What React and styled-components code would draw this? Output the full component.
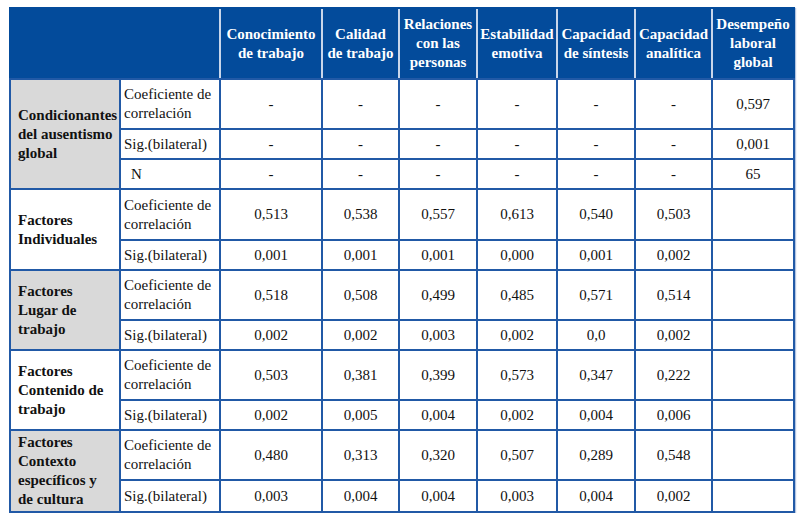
import React from "react";
import styled, { createGlobalStyle } from "styled-components";

const GlobalStyle = createGlobalStyle`
    body {
        margin: 0;
        background: #ffffff;
        font-family: "Liberation Serif", "Times New Roman", serif;
    }
`

const widths = [110, 100, 102, 77, 78, 80, 78, 77, 82]

const headers = [
    ["Conocimiento", "de trabajo"],
    ["Calidad", "de trabajo"],
    ["Relaciones", "con las", "personas"],
    ["Estabilidad", "emotiva"],
    ["Capacidad", "de síntesis"],
    ["Capacidad", "analítica"],
    ["Desempeño", "laboral", "global"],
]

const COEF = ["Coeficiente de", "correlación"]
const SIG = ["Sig.(bilateral)"]

const groups = [
    {
        label: ["Condicionantes", "del ausentismo", "global"],
        shaded: true,
        rows: [
            { name: COEF, h: 50, values: ["-", "-", "-", "-", "-", "-", "0,597"] },
            { name: SIG, h: 30, values: ["-", "-", "-", "-", "-", "-", "0,001"] },
            { name: ["N"], h: 30, indent: true, values: ["-", "-", "-", "-", "-", "-", "65"] },
        ],
    },
    {
        label: ["Factores", "Individuales"],
        rows: [
            { name: COEF, h: 51, values: ["0,513", "0,538", "0,557", "0,613", "0,540", "0,503", ""] },
            { name: SIG, h: 30, values: ["0,001", "0,001", "0,001", "0,000", "0,001", "0,002", ""] },
        ],
    },
    {
        label: ["Factores", "Lugar de", "trabajo"],
        shaded: true,
        rows: [
            { name: COEF, h: 50, values: ["0,518", "0,508", "0,499", "0,485", "0,571", "0,514", ""] },
            { name: SIG, h: 30, values: ["0,002", "0,002", "0,003", "0,002", "0,0", "0,002", ""] },
        ],
    },
    {
        label: ["Factores", "Contenido de", "trabajo"],
        rows: [
            { name: COEF, h: 50, values: ["0,503", "0,381", "0,399", "0,573", "0,347", "0,222", ""] },
            { name: SIG, h: 30, values: ["0,002", "0,005", "0,004", "0,002", "0,004", "0,006", ""] },
        ],
    },
    {
        label: ["Factores", "Contexto", "específicos y", "de cultura"],
        shaded: true,
        rows: [
            { name: COEF, h: 50, values: ["0,480", "0,313", "0,320", "0,507", "0,289", "0,548", ""] },
            { name: SIG, h: 32, values: ["0,003", "0,004", "0,004", "0,003", "0,004", "0,002", ""] },
        ],
    },
]

const Lines = ({ lines }) => lines.map((l, i) => (
    <React.Fragment key={i}>
        {i > 0 && <br />}
        {l}
    </React.Fragment>
))

const App = () => {
    return (
        <Page>
            <GlobalStyle />
            <Table>
                <colgroup>
                    {widths.map((w, i) => <col key={i} style={{ width: w }} />)}
                </colgroup>
                <thead>
                    <HeadRow>
                        <HeadCell colSpan={2} />
                        {headers.map((h, i) => (
                            <HeadCell key={i}><Lines lines={h} /></HeadCell>
                        ))}
                    </HeadRow>
                </thead>
                <tbody>
                    {groups.map((g, gi) =>
                        g.rows.map((r, ri) => (
                            <BodyRow key={`${gi}-${ri}`} $h={r.h}>
                                {ri === 0 && (
                                    <GroupCell rowSpan={g.rows.length} $shaded={g.shaded}>
                                        <Lines lines={g.label} />
                                    </GroupCell>
                                )}
                                <NameCell $indent={r.indent}><Lines lines={r.name} /></NameCell>
                                {r.values.map((v, vi) => (
                                    <ValueCell key={vi}>{v}</ValueCell>
                                ))}
                            </BodyRow>
                        ))
                    )}
                </tbody>
            </Table>
        </Page>
    )
}

const serif = `font-family: "Liberation Serif", "Times New Roman", serif;`

const Page = styled.div`
    padding: 7px 0 0 9px;
    ${serif}
`

const Table = styled.table`
    width: 784px;
    table-layout: fixed;
    border-collapse: collapse;
    ${serif}
    font-size: 15px;
    line-height: 19px;
    color: #111111;
    box-shadow: 1px 1px 1px rgba(40, 90, 170, 0.35);
`

const HeadRow = styled.tr`
    height: 71px;
    background-color: #034b9b;
`

const HeadCell = styled.th`
    padding: 0 1px;
    ${serif}
    color: #ffffff;
    font-weight: bold;
    text-align: center;
    vertical-align: middle;
    white-space: nowrap;
    border-left: 2px solid #c9d6ea;
    border-top: 2px solid #034b9b;
    border-bottom: 2px solid #2159a6;

    &:first-child {
        border-left: 2px solid #034b9b;
    }

    &:last-child {
        border-right: 2px solid #034b9b;
    }
`

const BodyRow = styled.tr`
    height: ${p => p.$h}px;
`

const cellBorder = `border: 2px solid #2159a6;`

const GroupCell = styled.td`
    ${cellBorder}
    ${serif}
    padding: 0 2px 0 7px;
    font-weight: bold;
    text-align: left;
    vertical-align: middle;
    white-space: nowrap;
    background-color: ${p => (p.$shaded ? "#d9d9d9" : "#ffffff")};
`

const NameCell = styled.td`
    ${cellBorder}
    ${serif}
    padding: 0 2px 0 ${p => (p.$indent ? 10 : 3)}px;
    text-align: left;
    vertical-align: middle;
    white-space: nowrap;
`

const ValueCell = styled.td`
    ${cellBorder}
    ${serif}
    padding: 0;
    text-align: center;
    vertical-align: middle;
`

export default App
